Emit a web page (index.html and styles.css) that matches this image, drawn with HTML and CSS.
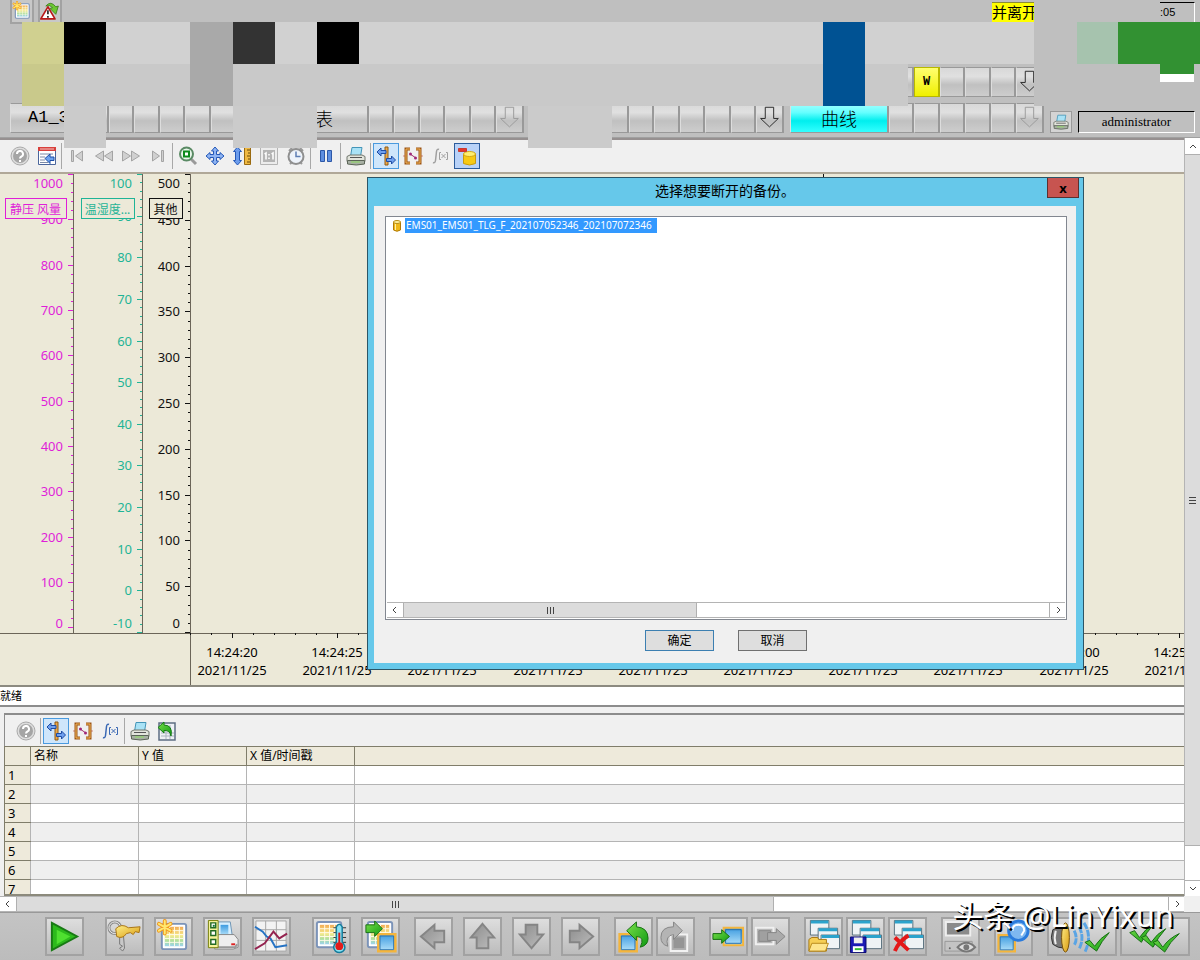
FILE: index.html
```html
<!DOCTYPE html>
<html lang="zh-CN">
<head>
    <meta charset="UTF-8">
    <meta name="viewport" content="width=device-width, initial-scale=1.0">
    <title>曲线</title>
    <link rel="stylesheet" href="styles.css">
</head>
<body>
    <svg class="defs" aria-hidden="true">
        <defs>
            <linearGradient id="gGreen" x1="0" y1="0" x2="1" y2="1"><stop offset="0" stop-color="#7be04a"/><stop offset="1" stop-color="#0d9a12"/></linearGradient>
            <linearGradient id="gBlue" x1="0" y1="0" x2="0" y2="1"><stop offset="0" stop-color="#3d9be0"/><stop offset="1" stop-color="#b4e2fa"/></linearGradient>
            <linearGradient id="gSheet" x1="0" y1="0" x2="0" y2="1"><stop offset="0" stop-color="#f2ac55"/><stop offset=".45" stop-color="#f5e98a"/><stop offset=".75" stop-color="#a9dfa0"/><stop offset="1" stop-color="#9cd2f0"/></linearGradient>
            <linearGradient id="gGold" x1="0" y1="0" x2="1" y2="1"><stop offset="0" stop-color="#fff08a"/><stop offset="1" stop-color="#d99a10"/></linearGradient>
            <linearGradient id="gGrey" x1="0" y1="0" x2="1" y2="1"><stop offset="0" stop-color="#8c8c8c"/><stop offset="1" stop-color="#bdbdbd"/></linearGradient>

            <symbol id="i-help" viewBox="0 0 20 20"><circle cx="10" cy="10" r="9" fill="#ddd" stroke="#aaa"/><circle cx="10" cy="10" r="7" fill="#a5a5a5"/><path d="M7 8a3 3 0 1 1 4.500 2.500Q10 11.300 10 12.500M10 14v2" fill="none" stroke="#fff" stroke-width="2"/></symbol>
            <symbol id="i-config" viewBox="0 0 20 20"><path d="M1.500 1.500h17v17h-17z" fill="#fff" stroke="#4b669c"/><path d="M1 1h18v4H1z" fill="#d8403c"/><path d="M3 3h14" stroke="#f6c8c4"/><path d="M3 8h13M3 11h5M3 14h5M3 16.500h8" stroke="#7c8ba8"/><path d="M8 12.500l5-4.500v3h4v3.500h-4v3z" fill="#6ca2ee" stroke="#1d4da6"/></symbol>
            <symbol id="i-first" viewBox="0 0 20 20"><path d="M4.500 4.500v11h2v-11zM15.500 5v10l-7-5z" fill="#d0d0d0" stroke="#a4a4a4"/></symbol>
            <symbol id="i-prev" viewBox="0 0 20 20"><path d="M9.500 5v10l-8-5zM18.500 5v10l-8-5z" fill="#d0d0d0" stroke="#a4a4a4"/></symbol>
            <symbol id="i-next" viewBox="0 0 20 20"><path d="M10.500 5v10l8-5zM1.500 5v10l8-5z" fill="#d0d0d0" stroke="#a4a4a4"/></symbol>
            <symbol id="i-last" viewBox="0 0 20 20"><path d="M15.500 4.500v11h-2v-11zM4.500 5v10l7-5z" fill="#d0d0d0" stroke="#a4a4a4"/></symbol>
            <symbol id="i-zoom" viewBox="0 0 20 20"><path d="M12 12l6 6" stroke="#9a9a9a" stroke-width="3"/><circle cx="8.500" cy="8" r="6.500" fill="#e8f6ea" stroke="#5a8a64" stroke-width="2"/><path d="M6 5.500h5v5H6z" fill="#fff" stroke="#0c8a1c" stroke-width="2"/></symbol>
            <symbol id="i-move" viewBox="0 0 20 20"><path d="M10 1l3.500 4h-2v3.500H15v-2l4 3.500-4 3.500v-2h-3.500V15h2L10 19l-3.500-4h2v-3.500H5v2L1 10l4-3.500v2h3.500V5h-2z" fill="#8fb4f2" stroke="#2458b8"/></symbol>
            <symbol id="i-scale" viewBox="0 0 20 20"><path d="M5.500 1l4 4.500h-2v9h2l-4 4.500-4-4.500h2v-9h-2z" fill="#6c9cec" stroke="#2458b8"/><path d="M12.500 1.500h6v17h-6z" fill="#f0b942" stroke="#9a6a10"/><path d="M15 4h3M16 7h2M15 10h3M16 13h2M15 16h3" stroke="#6b4a08"/></symbol>
            <symbol id="i-one" viewBox="0 0 20 20"><path d="M1.500 1.500h17v17h-17z" fill="#ececec" stroke="#b4b4b4"/><path d="M4 4h12v12H4z" fill="#b4b4b4"/><path d="M5.500 8L7 7v6.500M12.500 8L14 7v6.500M10 8v1.500m0 2V13" fill="none" stroke="#fff" stroke-width="1.500"/></symbol>
            <symbol id="i-clock" viewBox="0 0 20 20"><path d="M3 5l3-3M17 5l-3-3M4 18l2-2M16 18l-2-2" stroke="#999" stroke-width="2"/><circle cx="10" cy="10.500" r="7.500" fill="#eef3fa" stroke="#8f8f8f" stroke-width="2"/><path d="M10 5.500v5h4.500" fill="none" stroke="#5f7fb5" stroke-width="1.500"/></symbol>
            <symbol id="i-pause" viewBox="0 0 20 20"><path d="M4.500 4.500h4v11h-4zM11.500 4.500h4v11h-4z" fill="#5f8fe0" stroke="#2d58a8"/></symbol>
            <symbol id="i-printer" viewBox="0 0 20 20"><path d="M6 1.500h10l-1.500 9h-10z" fill="#a9e2f6" stroke="#4495b8"/><path d="M1 10.500l3-1.500h12l3 1.500v5H1z" fill="#e2e4dc" stroke="#70766c"/><path d="M1.500 14.500h17v3.500q-8 2-17 0z" fill="#a8b0a4" stroke="#5c6558"/><path d="M4 11.500h12" stroke="#555"/><path d="M5 16h9" stroke="#8bdc60"/></symbol>
            <symbol id="i-cursor" viewBox="0 0 20 20"><path d="M9 1h3v18H9z" fill="#eda94a" stroke="#8e5a14"/><path d="M1 6l4-4v2.500h5v3H5V10z" fill="#6fa0ee" stroke="#1f4da4"/><path d="M19.500 14l-4-4v2.500h-5v3h5V18z" fill="#6fa0ee" stroke="#1f4da4"/></symbol>
            <symbol id="i-bracket" viewBox="0 0 20 20"><path d="M0 10h4M16 10h4" stroke="#d58a80"/><path d="M7 3H3v14h4M13 3h4v14h-4" fill="none" stroke="#9c5414" stroke-width="3"/><path d="M7 3H3v14h4M13 3h4v14h-4" fill="none" stroke="#f4b95c"/><path d="M7 8l6 4" stroke="#a03070"/><circle cx="7.500" cy="8" r="1.500" fill="#a02878"/><circle cx="12.500" cy="12" r="1.500" fill="#a02878"/></symbol>
            <symbol id="i-fx" viewBox="0 0 20 20"><g fill="none" stroke="currentColor"><path d="M3 16.500q2 1 2.500-2l1-9q.5-3 2.500-2" stroke-width="1.500"/><path d="M11 6.500H9.500v7H11M16 6.500h1.500v7H16M11.500 8l4 4M15.500 8l-4 4"/></g></symbol>
            <symbol id="i-dbminus" viewBox="0 0 20 20"><path d="M6.500 8v9.500q6 3 12 0V8z" fill="#f7ca14" stroke="#c79a10"/><ellipse cx="12.500" cy="8" rx="6" ry="2.500" fill="#ffef70" stroke="#d2a818"/><path d="M1.500 2.500h8v3h-8z" fill="#e4362c" stroke="#c83a30"/></symbol>
            <symbol id="i-export" viewBox="0 0 20 20"><path d="M2 2h16v17H2z" fill="#eef1f5" stroke="#5d6d82" stroke-width="1.500"/><path d="M4 12h13M4 15h13M9 4v14M13 4v14" stroke="#a9b3c0"/><path d="M1 6.500L7 1v3q9 0 7 11-1-6-7-5.500V12z" fill="url(#gGreen)" stroke="#157a15"/></symbol>
            <symbol id="i-db" viewBox="0 0 10 12"><path d="M1.500 2v8q3.500 2.500 7 0V2z" fill="#f0b818" stroke="#b07a08"/><ellipse cx="5" cy="2" rx="3.500" ry="1.500" fill="#fff3a0" stroke="#b98a10"/><path d="M3.500 4v6" stroke="#fff0a0"/></symbol>

            <symbol id="sheet" viewBox="0 0 36 36"><rect x="6" y="5" width="25" height="26" rx="2" fill="#fff" stroke="#7b93b8" stroke-width="2"/><path d="M9 8h19v20H9z" fill="url(#gSheet)"/><path d="M9 12h19M9 16h19M9 20h19M9 24h19M14 8v20M19 8v20M24 8v20" stroke="#fffbe8"/></symbol>
            <symbol id="star" viewBox="0 0 36 36"><path d="M9 2v13M3 5l12 7M15 5L3 12" stroke="#f0981c" stroke-width="4" stroke-linecap="round"/><path d="M9 2v13M3 5l12 7M15 5L3 12" stroke="#ffe870" stroke-width="2" stroke-linecap="round"/></symbol>
            <symbol id="i-newsheet" viewBox="0 0 36 36"><use href="#sheet"/><use href="#star"/></symbol>
            <symbol id="i-alarm" viewBox="0 0 24 24"><path d="M7 6Q13-1 19 7l3-1-3 10-7-7 3-1q-3-4-8-2z" fill="#6cc832" stroke="#3b7d18"/><path d="M9.500 7L18 21.500H1z" fill="#fff" stroke="#b81818" stroke-width="2" stroke-linejoin="round"/><path d="M9.500 11v5m0 2v2" stroke="#222" stroke-width="2"/></symbol>
            <symbol id="i-play" viewBox="0 0 36 36"><path d="M5 4l26 14L5 32z" fill="#2cba1c" stroke="#187a14" stroke-width="2"/><path d="M10 11l14 7-14 8z" fill="#4fe030"/></symbol>
            <symbol id="i-key" viewBox="0 0 36 36"><circle cx="8" cy="9" r="6" fill="none" stroke="#8a8a8a" stroke-width="3"/><circle cx="8" cy="9" r="6" fill="none" stroke="#eee"/><path d="M13 18v8l3 2-3 2 3 3 2-3-1-12z" fill="#c8c8c8" stroke="#777"/><path d="M9 10q6-6 13-1l12-1-1 6-4-1-2 3-3-2-4 1q-4 6-10 3z" fill="url(#gGold)" stroke="#a87414"/></symbol>
            <symbol id="i-listprint" viewBox="0 0 36 36"><path d="M13 3h13l2 14H13z" fill="#d6efff" stroke="#6d95b5"/><path d="M16 6h8v11h-8z" fill="url(#gBlue)"/><path d="M10 20l4-4h16l4 5v8l-5 2H10z" fill="#eee" stroke="#888"/><path d="M10 29h21l2-3" fill="none" stroke="#999" stroke-width="2"/><path d="M27 26h4" stroke="#d22" stroke-width="2"/><path d="M3.500 1.500h10v28h-10z" fill="#f5f39a" stroke="#77800a"/><path d="M6 4h5v5H6zM6 12h5v5H6zM6 21h5v5H6z" fill="#fff" stroke="#236b23" stroke-width="1.500"/><path d="M8 6h2v2H8z" fill="#173"/></symbol>
            <symbol id="i-curves" viewBox="0 0 36 36"><path d="M2 2h31v31H2z" fill="#f3f3f3"/><path d="M2 11h31M2 22h31M12 2v31M23 2v31M2 2h31v31H2z" fill="none" stroke="#a5a5a5"/><path d="M1 8l8 5 4 5 4 2 5 9 12-2" fill="none" stroke="#2673c4" stroke-width="2"/><path d="M1 31l10-6 9-12 6 7 8-5" fill="none" stroke="#942450" stroke-width="2"/></symbol>
            <symbol id="i-thermo" viewBox="0 0 36 36"><use href="#sheet" x="-3" y="-2"/><path d="M20 9h13M20 14h13M20 19h13M20 24h13" stroke="#333"/><path d="M23 8q3-5 6 0v16q5 5 1 9-4 3-8 0-4-5 1-9z" fill="#89e2f2" stroke="#147c9c" stroke-width="1.500"/><path d="M26 14v12" stroke="#d41818" stroke-width="2"/><circle cx="26" cy="28" r="4" fill="#e21c1c"/></symbol>
            <symbol id="screen" viewBox="0 0 24 24"><path d="M2 2h20v20H2z" fill="url(#gBlue)" stroke="#f4b53c" stroke-width="3"/><path d="M4 4h16v16H4z" fill="none" stroke="#286ea8"/></symbol>
            <symbol id="i-sheetout" viewBox="0 0 36 36"><use href="#sheet" x="-1" y="-2"/><use href="#screen" x="14" y="14" width="21" height="21"/><path d="M3 6h9V2l8 8-8 8v-4H3z" fill="url(#gGreen)" stroke="#176d13"/></symbol>
            <symbol id="i-left" viewBox="0 0 36 36"><path d="M5 18L19 6v6h10v12H19v6z" fill="url(#gGrey)" stroke="#858585" stroke-width="2"/></symbol>
            <symbol id="i-up" viewBox="0 0 36 36"><path d="M18 5l12 14h-6v11H12V19H6z" fill="url(#gGrey)" stroke="#858585" stroke-width="2"/></symbol>
            <symbol id="i-down" viewBox="0 0 36 36"><path d="M18 30L6 16h6V6h12v10h6z" fill="url(#gGrey)" stroke="#858585" stroke-width="2"/></symbol>
            <symbol id="i-right" viewBox="0 0 36 36"><path d="M31 18L17 6v6H7v12h10v6z" fill="url(#gGrey)" stroke="#858585" stroke-width="2"/></symbol>
            <symbol id="i-undo" viewBox="0 0 36 36"><use href="#screen" x="2" y="14" width="21" height="21"/><path d="M11 12L21 3v5q12 1 12 12 0 7-8 9 5-11-4-11v4z" fill="url(#gGreen)" stroke="#176d13"/></symbol>
            <symbol id="i-redo" viewBox="0 0 36 36"><path d="M13 16h17v17H13z" fill="#b0b0b0" stroke="#f2f2f2" stroke-width="2"/><path d="M16 19h11v11H16z" fill="#959595"/><path d="M25 12L16 3v5Q3 8 3 19q0 7 7 9-3-11 6-12v5z" fill="#b4b4b4" stroke="#858585"/></symbol>
            <symbol id="i-goin" viewBox="0 0 36 36"><path d="M13 9h20v18H13z" fill="url(#gBlue)" stroke="#f4b53c" stroke-width="2"/><path d="M15 11h16v14H15z" fill="none" stroke="#286ea8"/><path d="M2 15h9v-4l8 7-8 7v-4H2z" fill="url(#gGreen)" stroke="#176d13"/></symbol>
            <symbol id="i-goout" viewBox="0 0 36 36"><path d="M3 9h18v17H3z" fill="#b8b8b8" stroke="#f0f0f0" stroke-width="2"/><path d="M6 12h12v11H6z" fill="#a0a0a0" stroke="#888"/><path d="M15 14h9v-4l9 8-9 8v-4h-9z" fill="#aaa" stroke="#858585"/></symbol>
            <symbol id="windows" viewBox="0 0 36 36"><g fill="#eef3f5" stroke="#58707c"><path d="M4.500 1.500h19v15h-19z"/><path d="M12.500 9.500h20v13h-20z"/><path d="M15.500 16.500h19v14h-19z"/></g><path d="M5 3h18M13 11h19M16 18h18" stroke="#2ba3cc" stroke-width="3"/></symbol>
            <symbol id="i-winopen" viewBox="0 0 36 36"><use href="#windows"/><path d="M3 21l3-2h6l1 2h8v12H3z" fill="#f6cf54" stroke="#a67914"/><path d="M3 33l3-8h17l-3 8z" fill="#fde58c" stroke="#b98a1c"/></symbol>
            <symbol id="i-winsave" viewBox="0 0 36 36"><use href="#windows"/><path d="M2.500 18.500h16v16h-16z" fill="#1a1ab4" stroke="#0a0a70"/><path d="M6 19h9v6H6z" fill="#eee"/><path d="M5 28h11v6H5z" fill="#fff"/><path d="M7 31h7" stroke="#3b3" stroke-width="2"/></symbol>
            <symbol id="i-windel" viewBox="0 0 36 36"><use href="#windows"/><path d="M5 19l14 13M19 17Q9 23 5 33" stroke="#e31818" stroke-width="4" fill="none"/></symbol>
            <symbol id="i-watch" viewBox="0 0 36 36"><path d="M3 3h25v14H3z" fill="#8b8b8b" stroke="#eee" stroke-width="2"/><path d="M2 23h28v10H2z" fill="#c4c4c4" stroke="#999"/><circle cx="7" cy="30" r="1" fill="#666"/><path d="M15 29q9-9 18 0-9 9-18 0z" fill="#ddd" stroke="#777" stroke-width="2"/><circle cx="24" cy="29" r="3" fill="#777"/></symbol>
            <symbol id="i-refresh" viewBox="0 0 36 36"><use href="#screen" x="1" y="15" width="20" height="20"/><circle cx="23" cy="12" r="10" fill="#7eb8f0" stroke="#2b7bdc" stroke-width="3"/><path d="M17 12q0-6 6-6t6 6l-3 5" fill="none" stroke="#fff" stroke-width="2"/></symbol>
            <symbol id="i-sound" viewBox="0 0 66 36"><path d="M3 11q5-3 12-3v22q-7 0-12-4-3-7 0-15z" fill="#777" stroke="#333"/><path d="M6 12q-2 7 0 14" fill="none" stroke="#eee" stroke-width="2"/><ellipse cx="16" cy="19" rx="4" ry="15" fill="url(#gGold)" stroke="#76500a"/><g fill="none" stroke="#5aa4e4" stroke-width="3" stroke-dasharray="7 1"><path d="M25 12q4 8 0 15"/><path d="M30 8q6 11 0 23"/><path d="M35 4q9 14 1 30"/></g><path d="M36 24l5-2 5 6q6-9 15-14-8 9-13 19z" fill="url(#gGreen)" stroke="#176d13"/></symbol>
            <symbol id="i-checks" viewBox="0 0 66 36"><g fill="url(#gGreen)" stroke="#176d13"><path d="M7 14l5-2 5 7q6-9 15-14-8 9-13 19z"/><path d="M19 19l5-2 5 7q6-9 15-14-8 9-13 19z"/><path d="M31 24l5-2 5 7q6-9 17-14-10 9-15 19z"/></g></symbol>
            <symbol id="i-navdown" viewBox="0 0 24 30"><path d="M8 3.500h9v12h5l-9.500 9-9.500-9h5z" fill="none" stroke="currentColor"/></symbol>
        </defs>
    </svg>

    <header class="header">
        <div class="header-top">
            <button class="top-btn" title="新建"><svg><use href="#i-newsheet"/></svg></button>
            <button class="top-btn" title="报警"><svg><use href="#i-alarm"/></svg></button>
            <div class="leave">并离开</div>
            <div class="time">:05</div>
        </div>
        <nav class="nav">
            <div class="nav-group nav-upper">
                <button class="nav-main"></button>
                <button></button><button class="warn">W</button><button></button><button></button><button></button>
                <button class="nav-arrow on" title="更多"><svg><use href="#i-navdown"/></svg></button>
            </div>
            <div class="nav-group">
                <button class="nav-main nav-code">A1_3</button>
                <button></button><button></button><button></button><button></button><button></button>
                <button class="nav-arrow" title="更多"><svg><use href="#i-navdown"/></svg></button>
            </div>
            <div class="nav-group">
                <button class="nav-main">_表</button>
                <button></button><button></button><button></button><button></button><button></button>
                <button class="nav-arrow" title="更多"><svg><use href="#i-navdown"/></svg></button>
            </div>
            <div class="nav-group">
                <button class="nav-main"></button>
                <button></button><button></button><button></button><button></button><button></button>
                <button class="nav-arrow on" title="更多"><svg><use href="#i-navdown"/></svg></button>
            </div>
            <div class="nav-group">
                <button class="nav-main current">曲线</button>
                <button></button><button></button><button></button><button></button><button></button>
                <button class="nav-arrow" title="更多"><svg><use href="#i-navdown"/></svg></button>
            </div>
            <div class="user">
                <button class="print-btn" title="打印"><svg><use href="#i-printer"/></svg></button>
                <div class="user-name">administrator</div>
            </div>
        </nav>
        <svg class="mosaic" width="1200" height="148" aria-hidden="true">
            <path fill="#bfbfbf" d="M1034 0h126v106h-126z"/>
            <path fill="#d1d1d1" d="M22 22h1012v42H22z"/>
            <path fill="#c9c9c9" d="M22 64h886v42H22z"/>
            <path fill="#d0d090" d="M22 22h42v42H22z"/>
            <path fill="#c9c98b" d="M22 64h42v42H22z"/>
            <path fill="#000" d="M64 22h42v42H64zM317 22h42v42h-42z"/>
            <path fill="#a9a9a9" d="M190 22h43v84h-43z"/>
            <path fill="#333" d="M233 22h42v42h-42z"/>
            <path fill="#005293" d="M823 22h42v84h-42z"/>
            <path fill="#cbcbcb" d="M64 106h42v42H64zM233 106h84v42h-84zM528 106h84v42h-84z"/>
            <path fill="#a6c3ae" d="M1077 22h42v42h-42z"/>
            <path fill="#329132" d="M1118 22h82v42h-82zM1160 64h34v10h-34z"/>
            <path fill="#fff" d="M1160 74h34v8h-34z"/>
        </svg>
    </header>

    <div class="main">
        <div class="content">
            <div class="toolbar">
                <button title="帮助"><svg><use href="#i-help"/></svg></button>
                <button title="配置"><svg><use href="#i-config"/></svg></button>
                <i></i>
                <button title="首记录"><svg><use href="#i-first"/></svg></button>
                <button title="上一条"><svg><use href="#i-prev"/></svg></button>
                <button title="下一条"><svg><use href="#i-next"/></svg></button>
                <button title="末记录"><svg><use href="#i-last"/></svg></button>
                <i></i>
                <button title="缩放"><svg><use href="#i-zoom"/></svg></button>
                <button title="移动"><svg><use href="#i-move"/></svg></button>
                <button title="轴"><svg><use href="#i-scale"/></svg></button>
                <button title="原始视图"><svg><use href="#i-one"/></svg></button>
                <button title="时间范围"><svg><use href="#i-clock"/></svg></button>
                <i></i>
                <button title="停止"><svg><use href="#i-pause"/></svg></button>
                <i></i>
                <button title="打印"><svg><use href="#i-printer"/></svg></button>
                <i></i>
                <button class="checked" title="标尺"><svg><use href="#i-cursor"/></svg></button>
                <button title="统计范围"><svg><use href="#i-bracket"/></svg></button>
                <button class="off" title="统计"><svg><use href="#i-fx"/></svg></button>
                <button class="checked strong" title="断开备份"><svg><use href="#i-dbminus"/></svg></button>
            </div>

            <div class="chart">
                <svg id="chart"></svg>
            </div>

            <div class="status">就绪</div>

            <div class="values">
                <div class="toolbar">
                    <button title="帮助"><svg><use href="#i-help"/></svg></button>
                    <i></i>
                    <button class="checked" title="标尺"><svg><use href="#i-cursor"/></svg></button>
                    <button title="统计范围"><svg><use href="#i-bracket"/></svg></button>
                    <button title="统计"><svg><use href="#i-fx"/></svg></button>
                    <i></i>
                    <button title="打印"><svg><use href="#i-printer"/></svg></button>
                    <button title="导出"><svg><use href="#i-export"/></svg></button>
                </div>
                <div class="table-box">
                    <table>
                        <thead>
                            <tr><th class="num"></th><th class="col">名称</th><th class="col">Y 值</th><th class="col">X 值/时间戳</th><th></th></tr>
                        </thead>
                        <tbody>
                            <tr><th>1</th><td></td><td></td><td></td><td></td></tr>
                            <tr><th>2</th><td></td><td></td><td></td><td></td></tr>
                            <tr><th>3</th><td></td><td></td><td></td><td></td></tr>
                            <tr><th>4</th><td></td><td></td><td></td><td></td></tr>
                            <tr><th>5</th><td></td><td></td><td></td><td></td></tr>
                            <tr><th>6</th><td></td><td></td><td></td><td></td></tr>
                            <tr><th>7</th><td></td><td></td><td></td><td></td></tr>
                        </tbody>
                    </table>
                </div>
            </div>
        </div>

        <div class="scroll vertical">
            <button title="向上"><svg viewBox="0 0 10 10"><path d="M2 7l3-3 3 3"/></svg></button>
            <div class="thumb"><svg viewBox="0 0 10 10"><path d="M1 2.500h7M1 5.500h7M1 8.500h7"/></svg></div>
            <div class="rest"></div>
            <button title="向下"><svg viewBox="0 0 10 10"><path d="M2 3l3 3 3-3"/></svg></button>
        </div>
        <div class="scroll">
            <button title="向左"><svg viewBox="0 0 10 10"><path d="M6 2L3 5l3 3"/></svg></button>
            <div class="thumb"><svg viewBox="0 0 10 10"><path d="M2.500 2v7M5.500 2v7M8.500 2v7"/></svg></div>
            <div class="rest"></div>
            <button title="向右"><svg viewBox="0 0 10 10"><path d="M4 2l3 3-3 3"/></svg></button>
        </div>

        <div class="dialog" role="dialog" aria-labelledby="dialogTitle">
            <div class="dialog-title">
                <span id="dialogTitle">选择想要断开的备份。</span>
                <button class="close" title="关闭">x</button>
            </div>
            <div class="dialog-body">
                <div class="list">
                    <div class="list-item"><svg><use href="#i-db"/></svg><span>EMS01_EMS01_TLG_F_202107052346_202107072346</span></div>
                    <div class="scroll">
                        <button title="向左"><svg viewBox="0 0 10 10"><path d="M6 2L3 5l3 3"/></svg></button>
                        <div class="thumb"><svg viewBox="0 0 10 10"><path d="M2.500 2v7M5.500 2v7M8.500 2v7"/></svg></div>
                        <div class="rest"></div>
                        <button title="向右"><svg viewBox="0 0 10 10"><path d="M4 2l3 3-3 3"/></svg></button>
                    </div>
                </div>
                <div class="dialog-actions">
                    <button class="ok">确定</button>
                    <button>取消</button>
                </div>
            </div>
        </div>
    </div>

    <footer class="footer">
        <div class="group first">
            <button title="启动"><svg><use href="#i-play"/></svg></button>
        </div>
        <div class="group far">
            <button title="登录"><svg><use href="#i-key"/></svg></button>
            <button title="新建表格"><svg><use href="#i-newsheet"/></svg></button>
            <button title="打印列表"><svg><use href="#i-listprint"/></svg></button>
            <button title="曲线"><svg><use href="#i-curves"/></svg></button>
        </div>
        <div class="group far">
            <button title="温度表"><svg><use href="#i-thermo"/></svg></button>
            <button title="输出"><svg><use href="#i-sheetout"/></svg></button>
        </div>
        <div class="group">
            <button title="左"><svg><use href="#i-left"/></svg></button>
            <button title="上"><svg><use href="#i-up"/></svg></button>
            <button title="下"><svg><use href="#i-down"/></svg></button>
            <button title="右"><svg><use href="#i-right"/></svg></button>
        </div>
        <div class="group tight">
            <button title="后退"><svg><use href="#i-undo"/></svg></button>
            <button title="前进"><svg><use href="#i-redo"/></svg></button>
        </div>
        <div class="group tight">
            <button title="存储画面"><svg><use href="#i-goin"/></svg></button>
            <button title="调用画面"><svg><use href="#i-goout"/></svg></button>
        </div>
        <div class="group tight">
            <button title="打开组合"><svg><use href="#i-winopen"/></svg></button>
            <button title="保存组合"><svg><use href="#i-winsave"/></svg></button>
            <button title="删除组合"><svg><use href="#i-windel"/></svg></button>
        </div>
        <div class="group">
            <button title="监视"><svg><use href="#i-watch"/></svg></button>
        </div>
        <div class="group">
            <button title="刷新"><svg><use href="#i-refresh"/></svg></button>
        </div>
        <div class="group tight">
            <button class="double" title="消音"><svg><use href="#i-sound"/></svg></button>
            <button class="double" title="全部确认"><svg><use href="#i-checks"/></svg></button>
        </div>
        <div class="watermark">头条 @LinYixun</div>
    </footer>
    <script src="chart.js"></script>
</body>
</html>
```
FILE: styles.css
```css
* {
    box-sizing: border-box;
}

body {
    margin: 0;
    height: 100vh;
    display: flex;
    flex-direction: column;
    overflow: hidden;
    background-color: #c0c0c0;
    font-family: "Noto Sans", "Noto Sans CJK SC", sans-serif;
    font-size: 12px;
    color: #000;
}

button {
    margin: 0;
    padding: 0;
    font-family: inherit;
    color: inherit;
}

.defs {
    position: absolute;
    width: 0;
    height: 0;
}

/* header */
.header {
    position: relative;
    z-index: 1;
    height: 138px;
    flex: none;
    background-color: #bfbfbf;
    border-bottom: 1px solid #a0a0a0;
}

.header-top {
    display: flex;
    height: 22px;
    padding-left: 10px;
    gap: 4px;
}

.top-btn {
    width: 24px;
    height: 24px;
    border: 2px solid #a2a2a2;
    border-top: none;
    background-color: #c8c8c8;
}

.top-btn svg {
    display: block;
    width: 20px;
    height: 22px;
}

.leave {
    width: 43px;
    margin: 2px 0 0 926px;
    border-top: 1px solid #8c8c30;
    background-color: #ff0;
    font-size: 15px;
    line-height: 19px;
    white-space: nowrap;
    overflow: hidden;
}

.time {
    margin: 2px 5px 0 auto;
    width: 35px;
    border-top: 1px solid #000;
    border-right: 1px solid #fff;
    font: 11px/18px "Liberation Sans", sans-serif;
}

.nav {
    display: grid;
    grid-template-columns: repeat(4, 254px) 1fr;
    grid-template-rows: 30px 30px;
    gap: 6px;
    padding: 45px 5px 0 10px;
}

.nav-group {
    display: flex;
}

.nav-upper {
    grid-column: 4;
    grid-row: 1;
}

.nav-upper ~ .nav-group {
    grid-row: 2;
}

.nav-group button {
    flex: 1;
    min-width: 0;
    border: 1px solid #999;
    border-right-width: 2px;
    border-left-color: #ddd;
    background-image: linear-gradient(#d8d8d8, #e0e0e0 30%, #c0c0c0 60%, #cdcdcd);
}

.nav-group .nav-main {
    flex: none;
    width: 99px;
    font-family: "Noto Sans CJK SC", sans-serif;
    font-size: 18px;
    line-height: 24px;
    font-weight: 300;
}

.nav-group .nav-code {
    padding-left: 17px;
    font-family: "Liberation Mono", monospace;
    font-size: 17px;
    text-align: left;
}

.nav-group .current {
    background-image: linear-gradient(#a0ffff, #6ff 30%, #0ee 60%, #3ff);
}

.nav-group .warn {
    background-image: linear-gradient(#ffff70, #f0f000);
    border-color: #b8b800;
    font: bold 12px "Liberation Mono", monospace;
}

.nav-group .nav-arrow {
    flex: none;
    width: 28px;
    color: #999;
}

.nav-group .on {
    color: #222;
}

.nav-arrow svg {
    display: block;
    width: 24px;
    height: 28px;
}

.user {
    grid-row: 2;
    grid-column: 5;
    display: flex;
    align-items: flex-end;
    gap: 6px;
}

.print-btn {
    width: 22px;
    height: 22px;
    border: 1px solid #999;
    background-color: #d4d4d4;
}

.print-btn svg {
    display: block;
    width: 16px;
    height: 16px;
    margin: auto;
}

.user-name {
    flex: 1;
    height: 22px;
    border: 1px solid #fff;
    border-top-color: #000;
    border-left-color: #000;
    font: 13px/20px "Liberation Serif", serif;
    text-align: center;
}

.mosaic {
    position: absolute;
    left: 0;
    top: 0;
}

/* work area */
.main {
    position: relative;
    flex: 1;
    min-height: 0;
    display: grid;
    grid-template-columns: minmax(0, 1fr) 16px;
    grid-template-rows: minmax(0, 1fr) 16px;
    background-color: #f0f0f0;
}

.content {
    display: flex;
    flex-direction: column;
    min-height: 0;
}

.toolbar {
    display: flex;
    flex: none;
    align-items: center;
    gap: 1px;
    height: 36px;
    padding-left: 7px;
    border-top: 2px solid #969090;
    border-bottom: 2px solid #b0a898;
    background-color: #f0f0f0;
}

.toolbar button {
    width: 26px;
    height: 26px;
    border: 1px solid transparent;
    background: none;
    color: #3a68b4;
}

.toolbar .checked {
    border-color: #4a9ade;
    background-color: #cfe6fb;
}

.toolbar .strong {
    border-color: #2c5c9c;
    background-color: #b8d2f8;
}

.toolbar .off {
    color: #a0a0a0;
}

.toolbar button svg {
    display: block;
    width: 20px;
    height: 20px;
    margin: auto;
}

.toolbar i {
    width: 2px;
    height: 26px;
    border-left: 1px solid #a8a8a8;
}

.chart {
    flex: 1;
    min-height: 0;
    background-color: #ece9d8;
    border-bottom: 2px solid #8c8a80;
}

.chart svg {
    display: block;
    width: 100%;
    height: 100%;
}

.chart text {
    font-size: 13px;
}

.status {
    flex: none;
    height: 20px;
    border-bottom: 2px solid #8c8c8c;
    background-color: #fff;
    font-size: 11px;
    line-height: 18px;
}

.values {
    flex: none;
    display: flex;
    flex-direction: column;
    height: 189px;
    padding: 6px 0 0 4px;
}

.values .toolbar {
    height: 33px;
    padding-left: 8px;
    border-top: 2px solid #8c8c8c;
    border-left: 1px solid #8c8c8c;
    border-bottom: none;
}

.table-box {
    flex: 1;
    min-height: 0;
    overflow: hidden;
    border-bottom: 2px solid #8c8a7c;
    background-color: #fff;
}

table {
    width: 100%;
    border-collapse: collapse;
    table-layout: fixed;
}

th,
td {
    height: 19px;
    padding: 0 0 0 3px;
    border: 1px solid #b4b4b4;
    border-right: none;
    line-height: 16px;
    text-align: left;
    font-weight: normal;
    white-space: nowrap;
}

th {
    background-color: #eeeadb;
    border-color: #807d6a;
}

tr:nth-child(even) td {
    background-color: #efefef;
}

tbody th {
    font-size: 13px;
}

.num {
    width: 26px;
}

.col {
    width: 108px;
}

/* scrollbars */
.scroll {
    display: flex;
    height: 16px;
    background-color: #fff;
    border: 1px solid #b4b4b4;
    border-width: 1px 0;
}

.scroll.vertical {
    flex-direction: column;
    height: auto;
    border-width: 0 0 0 1px;
}

.scroll button {
    width: 16px;
    height: 100%;
    border: none;
    background-color: #fff;
}

.scroll.vertical button {
    width: 100%;
    height: 16px;
}

.scroll svg {
    display: block;
    width: 10px;
    height: 10px;
    margin: auto;
    fill: none;
    stroke: #444;
}

.scroll .thumb {
    display: flex;
    flex: 757;
    border: 1px solid #b0b0b0;
    border-width: 0 1px;
    background-color: #dcdcdc;
}

.scroll .rest {
    flex: 395;
}

.scroll button:last-child {
    border-left: 1px solid #b0b0b0;
}

.scroll.vertical .thumb {
    flex: 690;
    border-width: 1px 0;
}

.scroll.vertical .rest {
    flex: 34;
}

.scroll.vertical button:last-child {
    border-left: none;
    border-top: 1px solid #b0b0b0;
}

/* dialog */
.dialog {
    position: absolute;
    left: 367px;
    top: 39px;
    width: 717px;
    height: 493px;
    display: flex;
    flex-direction: column;
    padding: 0 7px 6px 6px;
    border: 1px solid #2c5566;
    background-color: #66c8ea;
}

.dialog-title {
    position: relative;
    height: 28px;
    font-size: 14px;
    line-height: 26px;
    text-align: center;
}

.close {
    position: absolute;
    right: -3px;
    top: 0;
    width: 32px;
    height: 20px;
    border: 1px solid #5c3030;
    border-top: none;
    background-color: #c75450;
    font-size: 13px;
    font-weight: bold;
    line-height: 16px;
}

.dialog-body {
    flex: 1;
    display: flex;
    flex-direction: column;
    padding: 10px 9px 12px 11px;
    background-color: #f0f0f0;
}

.list {
    flex: 1;
    display: flex;
    flex-direction: column;
    justify-content: space-between;
    padding: 1px;
    border: 1px solid #828790;
    background-color: #fff;
}

.list-item {
    display: flex;
    align-items: center;
    gap: 3px;
    padding-left: 5px;
}

.list-item svg {
    width: 10px;
    height: 12px;
}

.list-item span {
    padding: 0 5px 0 1px;
    background-color: #3399ff;
    color: #fff;
    font-family: "Noto Sans", sans-serif;
    font-size: 10px;
    line-height: 15px;
}

.list .thumb {
    flex: 293;
}

.list .rest {
    flex: 354;
}

.dialog-actions {
    display: flex;
    justify-content: center;
    gap: 24px;
    padding-top: 10px;
}

.dialog-actions button {
    width: 69px;
    height: 21px;
    border: 1px solid #707070;
    background-color: #dedede;
    font-size: 12px;
    line-height: 16px;
}

.dialog-actions .ok {
    border-color: #3c7fb1;
}

/* bottom bar */
.footer {
    position: relative;
    z-index: 1;
    flex: none;
    display: flex;
    gap: 14px;
    height: 48px;
    padding-top: 4px;
    border-top: 1px solid #999;
    background-image: linear-gradient(#c4c4c4, #bcbcbc);
}

.group {
    display: flex;
    gap: 10px;
}

.first {
    margin-left: 45px;
}

.far {
    margin-left: 7px;
}

.tight {
    gap: 3px;
}

.group button {
    width: 39px;
    height: 39px;
    border: 2px solid #a2a2a2;
    background-image: linear-gradient(#dedede, #bcbcbc);
}

.group .double {
    width: 70px;
}

.group svg {
    display: block;
    width: 35px;
    height: 35px;
}

.group .double svg {
    width: 66px;
}

.watermark {
    position: absolute;
    right: 26px;
    top: -20px;
    color: #fff;
    font-family: "Noto Sans", "Noto Sans CJK SC", sans-serif;
    font-size: 31px;
    line-height: 44px;
    text-shadow: 2px 2px 0 #000;
    white-space: nowrap;
}
```
FILE: chart.js
```js
const NS = 'http://www.w3.org/2000/svg';
const svg = document.getElementById('chart');

const axes = [
    { name: '静压 风量', x: 73, color: '#e01ed8', min: -10, max: 1000, step: 100, box: [5, 61] },
    { name: '温湿度...', x: 142, color: '#1fb496', min: -10, max: 100, step: 10, box: [81, 53] },
    { name: '其他', x: 190, color: '#111', min: 0, max: 500, step: 50, box: [149, 33] }
];

function add(tag, attrs, text) {
    const el = document.createElementNS(NS, tag);
    for (const key in attrs) el.setAttribute(key, attrs[key]);
    if (text) el.textContent = text;
    svg.appendChild(el);
}

function line(x1, y1, x2, y2, color) {
    add('path', { d: `M${x1} ${y1}L${x2} ${y2}`, stroke: color, 'shape-rendering': 'crispEdges' });
}

function draw() {
    svg.innerHTML = '';
    const width = svg.clientWidth;
    const height = svg.clientHeight;
    const bottom = height - 52;

    axes.forEach(axis => {
        const toY = v => Math.round((axis.max - v) / (axis.max - axis.min) * (bottom - 1));
        line(axis.x, 0, axis.x, bottom, '#6b6558');
        for (let v = axis.max; v >= axis.min; v -= axis.step / 5) {
            const major = v % axis.step === 0;
            line(axis.x - (major ? 5 : 2), toY(v), axis.x, toY(v), axis.color);
            if (major) {
                const y = Math.min(Math.max(toY(v) + 5, 14), bottom - 5);
                add('text', { x: axis.x - 10, y, fill: axis.color, 'text-anchor': 'end' }, String(v));
            }
        }
        const [x, w] = axis.box;
        add('rect', { x: x + 0.5, y: 24.5, width: w, height: 20, fill: 'none', stroke: axis.color });
        add('rect', { x: x + 1, y: 25, width: w - 1, height: 19, fill: '#ece9d8' });
        add('text', { x: x + w / 2, y: 40, fill: axis.color, 'text-anchor': 'middle', style: 'font-size: 12px' }, axis.name);
    });

    line(0, bottom, width, bottom, '#6b6558');
    line(190, bottom, 190, height, '#6b6558');
    line(823, 0, 823, 4, '#111');

    // one label every five seconds
    const start = new Date(2021, 10, 25, 14, 24, 20);
    for (let i = 0; i * 105 + 190 < width; i++) {
        const x = Math.round(232 + i * 105.2);
        const t = new Date(start.getTime() + i * 5000);
        for (let k = -2; k < 3; k++) {
            line(x + k * 21, bottom, x + k * 21, bottom + (k ? 2 : 5), '#111');
        }
        add('text', { x, y: bottom + 24, 'text-anchor': 'middle' }, t.toTimeString().slice(0, 8));
        add('text', { x, y: bottom + 42, 'text-anchor': 'middle' }, '2021/11/25');
    }
}

draw();
window.addEventListener('resize', draw);
```
